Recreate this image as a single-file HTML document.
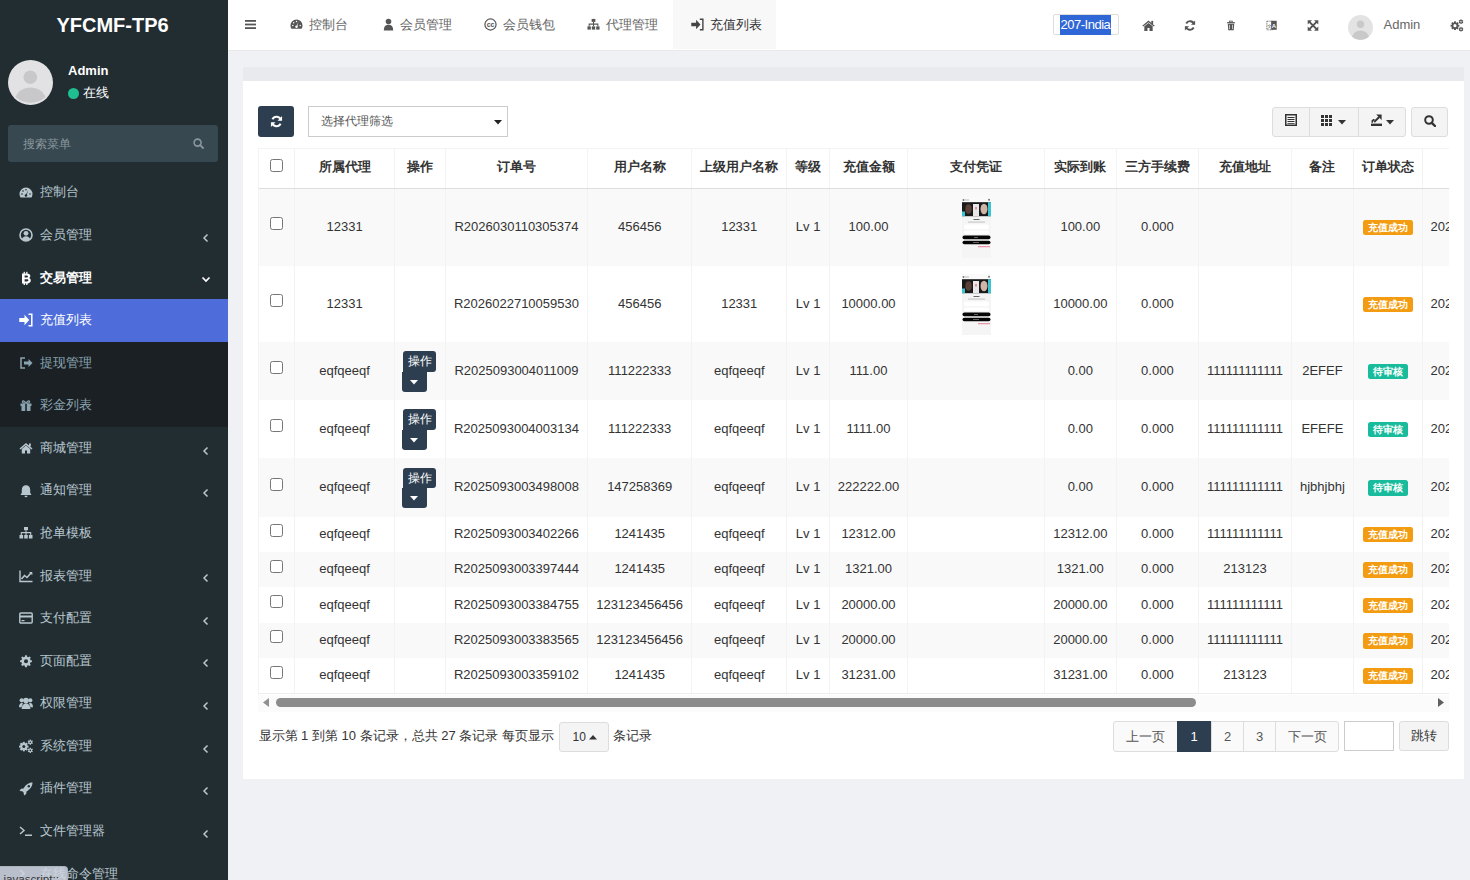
<!DOCTYPE html>
<html><head><meta charset="utf-8"><title>充值列表</title>
<style>
*{box-sizing:border-box;margin:0;padding:0}
html,body{width:1470px;height:880px;overflow:hidden}
body{font-family:"Liberation Sans",sans-serif;font-size:13px;color:#333;background:#f0f1f5;position:relative}
#sb{position:absolute;left:0;top:0;width:228px;height:880px;background:#222d32;overflow:hidden}
#logo{position:absolute;left:-1.5px;top:0;width:228px;height:50px;text-align:center;line-height:50px;color:#fff;font-size:20px;font-weight:bold}
.menu{position:absolute;left:0;width:228px;height:42.6px;color:#b8c7ce}
.menu .ic{position:absolute;left:19px;top:14.3px;width:14px;height:14px;line-height:0}
.menu .tx{position:absolute;left:40px;top:0;line-height:42.6px;font-size:13px}
.menu .ar{position:absolute;left:202.2px;top:18.8px}
.menu .ar2{position:absolute;left:201px;top:19px}
.menu.open{color:#fff}.menu.open .tx{font-weight:bold}.menu.act .tx{font-weight:500}
.menu.act{background:#4e6dda;color:#fff}
.menu.sub{background:#1b2025;color:#8aa4af}
#subbg{position:absolute;left:0;top:341.5px;width:228px;height:84px;background:#1b2025}
#hdr{position:absolute;left:228px;top:0;width:1242px;height:51px;background:#fff;border-bottom:1px solid #e6e8eb}
.tabt{position:absolute;top:1px;line-height:48px;font-size:13px;white-space:nowrap}
#panel{position:absolute;left:242.5px;top:66.5px;width:1221.2px;height:712px;background:#fff}
#ph{position:absolute;left:0;top:0;width:100%;height:14.3px;background:#e9eaee}
#tbl{position:absolute;left:258px;top:147.6px;width:1190.6px;height:547px;overflow:hidden}
.hrow{position:absolute;left:0;width:1300px;background:#fff}
.trow{position:absolute;left:0;width:1300px}
.cell{position:absolute;display:flex;align-items:center;justify-content:center;padding-bottom:2px;white-space:nowrap;overflow:hidden;font-size:13px;color:#333}
.th{font-weight:bold}
.vl{position:absolute;top:0;width:1px;height:546px;background:#f3f3f3}
.cb{display:inline-block;width:13px;height:13px;border:1px solid #767676;border-radius:2.5px;background:#fff}
.lbl{display:inline-block;color:#fff;font-size:10px;font-weight:bold;height:15.7px;line-height:15.7px;border-radius:2.5px;text-align:center;margin-top:2.5px}
.suc{background:#f39c12;width:50.5px}
.wait{background:#18bc9c;width:40.5px}
.opb{position:relative;width:36px;height:41px;margin-left:-2px;margin-top:3px}
.op1{position:absolute;left:1.8px;top:0;width:33.6px;height:20.7px;background:#2c3e50;border-radius:3px 3px 3px 0;color:#fff;font-size:12px;font-weight:500;line-height:20.5px;text-align:center}
.op2{position:absolute;left:0.6px;top:20.7px;width:25.7px;height:20px;background:#2c3e50;border-radius:0 0 3px 3px;line-height:0;text-align:center;padding-top:7.5px}
.btnp{position:absolute;background:#2c3e50;border-radius:3px}
.sel{position:absolute;border:1px solid #ccc;background:#fff}
.bgrp{position:absolute;background:#f4f4f4;border:1px solid #ddd;border-radius:3px}
.ft{position:absolute;font-size:13px;color:#333;line-height:18px;white-space:nowrap}
.pgi{position:absolute;top:720.6px;height:31.7px;line-height:31.7px;text-align:center;color:#555;font-size:13px}
</style></head><body>
<div id="sb">
<div id="logo">YFCMF-TP6</div>
<svg style="position:absolute;left:8px;top:60px" width="45" height="45" viewBox="0 0 45 45"><circle cx="22.5" cy="22.5" r="22.5" fill="#e2e2e4"/><circle cx="22.3" cy="17.3" r="6.8" fill="#c8c8ca"/><path d="M7.5 37c2.5-6 8-9.5 15-9.5s12.5 3.5 15 9.5A22.5 22.5 0 0 1 7.5 37z" fill="#c8c8ca"/></svg>
<div style="position:absolute;left:68px;top:62px;color:#fff;font-weight:bold;font-size:13px;line-height:18px">Admin</div>
<div style="position:absolute;left:68px;top:88px;width:11px;height:11px;border-radius:50%;background:#1fbf8f"></div>
<div style="position:absolute;left:83px;top:84px;color:#fff;font-size:13px;line-height:18px">在线</div>
<div style="position:absolute;left:8px;top:125px;width:210px;height:37px;background:#374850;border-radius:3px"></div>
<div style="position:absolute;left:22.5px;top:135px;color:#8b979d;font-size:12px;line-height:18px">搜索菜单</div>
<svg style="position:absolute;left:192.5px;top:137.5px" width="11" height="11" viewBox="0 0 11 11"><circle cx="4.6" cy="4.6" r="3.5" fill="none" stroke="#8b979d" stroke-width="1.6"/><path d="M7.2 7.2 L10 10" stroke="#8b979d" stroke-width="1.8" stroke-linecap="round"/></svg>
<div id="subbg"></div>
<div class="menu" style="top:171.4px"><span class="ic"><svg width="14" height="14" viewBox="0 0 14 14" style=""><path d="M7 1.5A6.5 6.5 0 0 0 0.5 8c0 1.3.4 2.5 1 3.5h11c.6-1 1-2.2 1-3.5A6.5 6.5 0 0 0 7 1.5z" fill="currentColor"/><circle cx="7" cy="9.5" r="1.3" fill="#222d32"/><path d="M6.6 9.3 L9.2 4.2 L7.6 9.6z" fill="#222d32"/><circle cx="3" cy="8" r=".8" fill="#222d32"/><circle cx="4" cy="5" r=".8" fill="#222d32"/><circle cx="7" cy="3.8" r=".8" fill="#222d32"/><circle cx="11" cy="8" r=".8" fill="#222d32"/></svg></span><span class="tx">控制台</span></div>
<div class="menu" style="top:214.0px"><span class="ic"><svg width="14" height="14" viewBox="0 0 14 14" style=""><circle cx="7" cy="7" r="6" fill="none" stroke="currentColor" stroke-width="1.6"/><circle cx="7" cy="5.3" r="2.4" fill="currentColor"/><path d="M2.8 11.2c.8-2 2.3-3 4.2-3s3.4 1 4.2 3A6 6 0 0 1 2.8 11.2z" fill="currentColor"/></svg></span><span class="tx">会员管理</span><svg class="ar" width="7" height="10" viewBox="0 0 7 10"><path d="M5.5 1.5 L2 5 L5.5 8.5" stroke="currentColor" stroke-width="1.5" fill="none"/></svg></div>
<div class="menu open" style="top:256.5px"><span class="ic"><svg width="14" height="14" viewBox="0 0 14 14" style=""><path d="M3 2.5h5c2.2 0 3.3 1 3.3 2.6 0 1-.6 1.7-1.4 2 1.1.3 1.9 1.1 1.9 2.4 0 1.8-1.3 2.9-3.6 2.9H3z" fill="currentColor"/><path d="M5.6 4.4h2c.9 0 1.3.4 1.3 1s-.4 1-1.3 1h-2zM5.6 8.2h2.3c1 0 1.5.4 1.5 1.1s-.5 1.1-1.5 1.1H5.6z" fill="#222d32"/><rect x="4.6" y="0.8" width="1.3" height="2" fill="currentColor"/><rect x="7.2" y="0.8" width="1.3" height="2" fill="currentColor"/><rect x="4.6" y="12" width="1.3" height="2" fill="currentColor"/><rect x="7.2" y="12" width="1.3" height="2" fill="currentColor"/></svg></span><span class="tx">交易管理</span><svg class="ar2" width="10" height="7" viewBox="0 0 10 7"><path d="M1.5 1.5 L5 5 L8.5 1.5" stroke="currentColor" stroke-width="1.7" fill="none"/></svg></div>
<div class="menu act" style="top:299.1px"><span class="ic"><svg width="14" height="14" viewBox="0 0 14 14" style=""><path d="M0.3 5h5.2V1.8l4.7 5.2-4.7 5.2V9H0.3z" fill="currentColor"/><path d="M9.5 1.3h3.3v11.4H9.5" fill="none" stroke="currentColor" stroke-width="1.5"/></svg></span><span class="tx">充值列表</span></div>
<div class="menu sub" style="top:341.7px"><span class="ic"><svg width="14" height="14" viewBox="0 0 14 14" style=""><path d="M6 2H2v10h4" fill="none" stroke="currentColor" stroke-width="1.5"/><path d="M5 5.5h4.5V3l4 4-4 4V8.5H5z" fill="currentColor"/></svg></span><span class="tx">提现管理</span></div>
<div class="menu sub" style="top:384.2px"><span class="ic"><svg width="14" height="14" viewBox="0 0 14 14" style=""><rect x="1.5" y="5.5" width="11" height="2.5" fill="currentColor"/><rect x="2.5" y="8" width="9" height="5" fill="currentColor"/><rect x="6.2" y="5" width="1.6" height="8" fill="#1b2025"/><path d="M7 5.2C5 2 3 2.5 3.5 4s3.5 1.2 3.5 1.2zM7 5.2C9 2 11 2.5 10.5 4S7 5.2 7 5.2z" fill="none" stroke="currentColor" stroke-width="1.2"/></svg></span><span class="tx">彩金列表</span></div>
<div class="menu" style="top:426.8px"><span class="ic"><svg width="14" height="14" viewBox="0 0 14 14" style=""><path d="M7 2 L0.5 7.5 1.5 8.5 7 4 12.5 8.5 13.5 7.5z" fill="currentColor"/><path d="M2.8 8v4.5h3.2V9.5h2v3h3.2V8L7 4.6z" fill="currentColor"/><rect x="10" y="2.5" width="1.8" height="3" fill="currentColor"/></svg></span><span class="tx">商城管理</span><svg class="ar" width="7" height="10" viewBox="0 0 7 10"><path d="M5.5 1.5 L2 5 L5.5 8.5" stroke="currentColor" stroke-width="1.5" fill="none"/></svg></div>
<div class="menu" style="top:469.4px"><span class="ic"><svg width="14" height="14" viewBox="0 0 14 14" style=""><path d="M7 1.2c-2.6 0-4.2 2-4.2 4.6v3L1.5 11h11l-1.3-2.2v-3C11.2 3.2 9.6 1.2 7 1.2z" fill="currentColor"/><path d="M5.5 11.8a1.5 1.5 0 0 0 3 0z" fill="currentColor"/></svg></span><span class="tx">通知管理</span><svg class="ar" width="7" height="10" viewBox="0 0 7 10"><path d="M5.5 1.5 L2 5 L5.5 8.5" stroke="currentColor" stroke-width="1.5" fill="none"/></svg></div>
<div class="menu" style="top:512.0px"><span class="ic"><svg width="14" height="14" viewBox="0 0 14 14" style=""><rect x="5" y="1" width="4" height="3.2" fill="currentColor"/><rect x="0.5" y="9" width="3.6" height="3.5" fill="currentColor"/><rect x="5.2" y="9" width="3.6" height="3.5" fill="currentColor"/><rect x="9.9" y="9" width="3.6" height="3.5" fill="currentColor"/><path d="M7 4.2V9M2.3 9V6.6h9.4V9" fill="none" stroke="currentColor" stroke-width="1.1"/></svg></span><span class="tx">抢单模板</span></div>
<div class="menu" style="top:554.5px"><span class="ic"><svg width="14" height="14" viewBox="0 0 14 14" style=""><path d="M1 1.5V12.5H13.5" fill="none" stroke="currentColor" stroke-width="1.4"/><path d="M2.5 10 L5.5 6.5 8 8.5 12 4" fill="none" stroke="currentColor" stroke-width="1.6"/><path d="M10 3h3.3v3.3z" fill="currentColor"/></svg></span><span class="tx">报表管理</span><svg class="ar" width="7" height="10" viewBox="0 0 7 10"><path d="M5.5 1.5 L2 5 L5.5 8.5" stroke="currentColor" stroke-width="1.5" fill="none"/></svg></div>
<div class="menu" style="top:597.1px"><span class="ic"><svg width="14" height="14" viewBox="0 0 14 14" style=""><rect x="0.8" y="2" width="12.4" height="10" rx="1" fill="none" stroke="currentColor" stroke-width="1.4"/><rect x="0.8" y="4.5" width="12.4" height="2" fill="currentColor"/><rect x="2.5" y="9" width="3" height="1.2" fill="currentColor"/></svg></span><span class="tx">支付配置</span><svg class="ar" width="7" height="10" viewBox="0 0 7 10"><path d="M5.5 1.5 L2 5 L5.5 8.5" stroke="currentColor" stroke-width="1.5" fill="none"/></svg></div>
<div class="menu" style="top:639.7px"><span class="ic"><svg width="14" height="14" viewBox="0 0 14 14" style=""><path d="M6 1h2l.4 1.8 1.3.6 1.6-1 1.4 1.4-1 1.6.6 1.3L14 7v2l-1.8.4-.6 1.3 1 1.6-1.4 1.4-1.6-1-1.3.6L8 15H6l-.4-1.8-1.3-.6-1.6 1-1.4-1.4 1-1.6-.6-1.3L0 9V7l1.8-.4.6-1.3-1-1.6 1.4-1.4 1.6 1 1.3-.6z" transform="scale(.85) translate(1.2,0.5)" fill="currentColor"/><circle cx="7" cy="7.2" r="2" fill="#222d32"/></svg></span><span class="tx">页面配置</span><svg class="ar" width="7" height="10" viewBox="0 0 7 10"><path d="M5.5 1.5 L2 5 L5.5 8.5" stroke="currentColor" stroke-width="1.5" fill="none"/></svg></div>
<div class="menu" style="top:682.2px"><span class="ic"><svg width="14" height="14" viewBox="0 0 14 14" style=""><circle cx="7" cy="4.6" r="2.8" fill="currentColor"/><path d="M2.6 13c0-3.3 1.6-5.6 4.4-5.6s4.4 2.3 4.4 5.6z" fill="currentColor"/><circle cx="2.7" cy="4.3" r="2.1" fill="currentColor"/><circle cx="11.3" cy="4.3" r="2.1" fill="currentColor"/><path d="M0 11.3c0-2.6 1-4.3 2.7-4.3.7 0 1.2.2 1.6.5-1 1-1.6 2.3-1.7 3.8z" fill="currentColor"/><path d="M14 11.3c0-2.6-1-4.3-2.7-4.3-.7 0-1.2.2-1.6.5 1 1 1.6 2.3 1.7 3.8z" fill="currentColor"/></svg></span><span class="tx">权限管理</span><svg class="ar" width="7" height="10" viewBox="0 0 7 10"><path d="M5.5 1.5 L2 5 L5.5 8.5" stroke="currentColor" stroke-width="1.5" fill="none"/></svg></div>
<div class="menu" style="top:724.8px"><span class="ic"><svg width="14" height="14" viewBox="0 0 14 14" style=""><rect x="3.75" y="2.90" width="2.10" height="9.40" transform="rotate(0.0 4.8 7.6)" fill="currentColor"/><rect x="3.75" y="2.90" width="2.10" height="9.40" transform="rotate(45.0 4.8 7.6)" fill="currentColor"/><rect x="3.75" y="2.90" width="2.10" height="9.40" transform="rotate(90.0 4.8 7.6)" fill="currentColor"/><rect x="3.75" y="2.90" width="2.10" height="9.40" transform="rotate(135.0 4.8 7.6)" fill="currentColor"/><circle cx="4.8" cy="7.6" r="3.5" fill="currentColor"/><circle cx="4.8" cy="7.6" r="1.5" fill="#222d32"/><rect x="10.65" y="0.60" width="1.30" height="5.20" transform="rotate(0.0 11.3 3.2)" fill="currentColor"/><rect x="10.65" y="0.60" width="1.30" height="5.20" transform="rotate(60.0 11.3 3.2)" fill="currentColor"/><rect x="10.65" y="0.60" width="1.30" height="5.20" transform="rotate(120.0 11.3 3.2)" fill="currentColor"/><circle cx="11.3" cy="3.2" r="1.8" fill="currentColor"/><circle cx="11.3" cy="3.2" r=".8" fill="#222d32"/><rect x="10.65" y="8.80" width="1.30" height="5.20" transform="rotate(0.0 11.3 11.4)" fill="currentColor"/><rect x="10.65" y="8.80" width="1.30" height="5.20" transform="rotate(60.0 11.3 11.4)" fill="currentColor"/><rect x="10.65" y="8.80" width="1.30" height="5.20" transform="rotate(120.0 11.3 11.4)" fill="currentColor"/><circle cx="11.3" cy="11.4" r="1.8" fill="currentColor"/><circle cx="11.3" cy="11.4" r=".8" fill="#222d32"/></svg></span><span class="tx">系统管理</span><svg class="ar" width="7" height="10" viewBox="0 0 7 10"><path d="M5.5 1.5 L2 5 L5.5 8.5" stroke="currentColor" stroke-width="1.5" fill="none"/></svg></div>
<div class="menu" style="top:767.4px"><span class="ic"><svg width="14" height="14" viewBox="0 0 14 14" style=""><path d="M13.5 0.5C9.5 0.5 6.5 3 4.5 6.5L2 6.8 0.5 9l2.8.3L4.7 10.7 5 13.5l2.2-1.5.3-2.5C11 7.5 13.5 4.5 13.5 0.5z" fill="currentColor"/><circle cx="9.8" cy="4.2" r="1.2" fill="#222d32"/></svg></span><span class="tx">插件管理</span><svg class="ar" width="7" height="10" viewBox="0 0 7 10"><path d="M5.5 1.5 L2 5 L5.5 8.5" stroke="currentColor" stroke-width="1.5" fill="none"/></svg></div>
<div class="menu" style="top:809.9px"><span class="ic"><svg width="14" height="14" viewBox="0 0 14 14" style=""><path d="M1 3l4 3.5-4 3.5" fill="none" stroke="currentColor" stroke-width="1.5"/><rect x="6" y="10.5" width="7" height="1.5" fill="currentColor"/></svg></span><span class="tx">文件管理器</span><svg class="ar" width="7" height="10" viewBox="0 0 7 10"><path d="M5.5 1.5 L2 5 L5.5 8.5" stroke="currentColor" stroke-width="1.5" fill="none"/></svg></div>
<div class="menu" style="top:852.5px"><span class="ic"><svg width="14" height="14" viewBox="0 0 14 14" style=""><path d="M1 3l4 3.5-4 3.5" fill="none" stroke="currentColor" stroke-width="1.5"/><rect x="6" y="10.5" width="7" height="1.5" fill="currentColor"/></svg></span><span class="tx">在线命令管理</span></div>
</div>
<div id="hdr">
<svg style="position:absolute;left:17px;top:20px" width="11" height="9" viewBox="0 0 11 9"><rect y="0" width="11" height="1.8" fill="#555"/><rect y="3.6" width="11" height="1.8" fill="#555"/><rect y="7.2" width="11" height="1.8" fill="#555"/></svg>
<div style="position:absolute;left:444.6px;top:0;width:103.4px;height:48.5px;background:#f8f8f8"></div>
<span style="position:absolute;left:62px;top:18px;color:#555"><svg width="13" height="13" viewBox="0 0 14 14" style=""><path d="M7 1.5A6.5 6.5 0 0 0 0.5 8c0 1.3.4 2.5 1 3.5h11c.6-1 1-2.2 1-3.5A6.5 6.5 0 0 0 7 1.5z" fill="currentColor"/><circle cx="7" cy="9.5" r="1.3" fill="#fff"/><path d="M6.6 9.3 L9.2 4.2 L7.6 9.6z" fill="#fff"/><circle cx="3" cy="8" r=".8" fill="#fff"/><circle cx="4" cy="5" r=".8" fill="#fff"/><circle cx="7" cy="3.8" r=".8" fill="#fff"/><circle cx="11" cy="8" r=".8" fill="#fff"/></svg></span>
<span class="tabt" style="left:80.5px;color:#666">控制台</span>
<span style="position:absolute;left:154px;top:18px;color:#555"><svg width="13" height="13" viewBox="0 0 14 14" style=""><circle cx="7" cy="3.8" r="3" fill="currentColor"/><path d="M2 13.5c0-4 1.5-6.3 5-6.3s5 2.3 5 6.3z" fill="currentColor"/></svg></span>
<span class="tabt" style="left:171.5px;color:#666">会员管理</span>
<span style="position:absolute;left:255.5px;top:18px;color:#555"><svg width="13" height="13" viewBox="0 0 14 14" style=""><circle cx="7" cy="7" r="6" fill="none" stroke="currentColor" stroke-width="1.3"/><text x="7" y="9.3" text-anchor="middle" font-family="Liberation Sans" font-weight="bold" font-size="7.6" fill="currentColor" letter-spacing="-0.3">cc</text></svg></span>
<span class="tabt" style="left:274.5px;color:#666">会员钱包</span>
<span style="position:absolute;left:359px;top:18px;color:#555"><svg width="13" height="13" viewBox="0 0 14 14" style=""><rect x="5" y="1" width="4" height="3.2" fill="currentColor"/><rect x="0.5" y="9" width="3.6" height="3.5" fill="currentColor"/><rect x="5.2" y="9" width="3.6" height="3.5" fill="currentColor"/><rect x="9.9" y="9" width="3.6" height="3.5" fill="currentColor"/><path d="M7 4.2V9M2.3 9V6.6h9.4V9" fill="none" stroke="currentColor" stroke-width="1.1"/></svg></span>
<span class="tabt" style="left:378px;color:#666">代理管理</span>
<span style="position:absolute;left:463px;top:18px;color:#444"><svg width="13" height="13" viewBox="0 0 14 14" style=""><path d="M0.3 5h5.2V1.8l4.7 5.2-4.7 5.2V9H0.3z" fill="currentColor"/><path d="M9.5 1.3h3.3v11.4H9.5" fill="none" stroke="currentColor" stroke-width="1.5"/></svg></span>
<span class="tabt" style="left:481.5px;color:#333">充值列表</span>
<div style="position:absolute;left:824.5px;top:14.3px;width:66px;height:21.2px;border:1px solid #ddd;border-radius:2px;background:#fff"></div>
<div style="position:absolute;left:832px;top:15px;width:51px;height:19.7px;background:#3067d6;color:#fff;font-size:13px;line-height:19.7px;letter-spacing:-0.5px;padding-left:0.6px;white-space:nowrap">207-India</div>
<span style="position:absolute;left:913.5px;top:18.5px;color:#555"><svg width="13" height="13" viewBox="0 0 14 14" style=""><path d="M7 1.5 L0.3 7.2 1.3 8.2 7 3.6 12.7 8.2 13.7 7.2z" fill="currentColor"/><path d="M2.5 7.8v5h3.4V9.6h2.2v3.2h3.4v-5L7 4.2z" fill="currentColor"/><rect x="10" y="2" width="2" height="3.5" fill="currentColor"/></svg></span>
<span style="position:absolute;left:956px;top:18.5px;color:#555"><svg width="12" height="13" viewBox="0 0 14 14" style=""><path d="M11.8 5.5A5 5 0 0 0 2.6 4.6" fill="none" stroke="currentColor" stroke-width="2.2"/><path d="M13 1.2v4.9H8.1z" fill="currentColor"/><path d="M2.2 8.5a5 5 0 0 0 9.2.9" fill="none" stroke="currentColor" stroke-width="2.2"/><path d="M1 12.8V7.9h4.9z" fill="currentColor"/></svg></span>
<span style="position:absolute;left:998px;top:18.5px;color:#555"><svg width="10" height="13" viewBox="0 0 14 14" style=""><rect x="1.5" y="2.3" width="11" height="1.6" fill="currentColor"/><rect x="5" y="0.8" width="4" height="1.6" fill="none" stroke="currentColor" stroke-width="1"/><path d="M2.5 4.5h9l-.7 9H3.2z" fill="currentColor"/><rect x="4.7" y="6" width=".9" height="6" fill="#fff"/><rect x="8.4" y="6" width=".9" height="6" fill="#fff"/></svg></span>
<span style="position:absolute;left:1038px;top:18.5px;color:#555"><svg width="12" height="13" viewBox="0 0 14 14" style=""><rect x="1" y="2" width="6.5" height="10" fill="none" stroke="currentColor" stroke-width="1" stroke-dasharray="1.2 .8"/><path d="M6 1.5h6.5v10.5H6z" fill="currentColor"/><text x="9.3" y="10" text-anchor="middle" font-family="Liberation Sans" font-weight="bold" font-size="7" fill="#fff">A</text><text x="3.6" y="9.5" text-anchor="middle" font-family="Liberation Sans" font-size="6" fill="currentColor">文</text></svg></span>
<span style="position:absolute;left:1079px;top:18.5px;color:#555"><svg width="12" height="13" viewBox="0 0 14 14" style=""><path d="M2.5 2.5 L11.5 11.5 M11.5 2.5 L2.5 11.5" stroke="currentColor" stroke-width="2.3"/><path d="M0.8 0.8h5L0.8 5.8z M13.2 0.8v5L8.2 0.8z M0.8 13.2v-5L5.8 13.2z M13.2 13.2h-5L13.2 8.2z" fill="currentColor"/></svg></span>
<svg style="position:absolute;left:1120px;top:14.7px" width="25" height="25" viewBox="0 0 25 25"><circle cx="12.5" cy="12.5" r="12.5" fill="#e3e3e3"/><circle cx="12.5" cy="9.3" r="3.7" fill="#c9c9c9"/><path d="M4 21.5c1.5-4 4.5-6 8.5-6s7 2 8.5 6A12.5 12.5 0 0 1 4 21.5z" fill="#c9c9c9"/></svg>
<span class="tabt" style="left:1155.5px;color:#666">Admin</span>
<span style="position:absolute;left:1222px;top:18.5px;color:#555"><svg width="14" height="13" viewBox="0 0 14 14" style=""><rect x="3.75" y="2.50" width="2.10" height="9.40" transform="rotate(0.0 4.8 7.2)" fill="currentColor"/><rect x="3.75" y="2.50" width="2.10" height="9.40" transform="rotate(45.0 4.8 7.2)" fill="currentColor"/><rect x="3.75" y="2.50" width="2.10" height="9.40" transform="rotate(90.0 4.8 7.2)" fill="currentColor"/><rect x="3.75" y="2.50" width="2.10" height="9.40" transform="rotate(135.0 4.8 7.2)" fill="currentColor"/><circle cx="4.8" cy="7.2" r="3.5" fill="currentColor"/><circle cx="4.8" cy="7.2" r="1.7" fill="#fff"/><rect x="10.65" y="0.40" width="1.30" height="5.00" transform="rotate(0.0 11.3 2.9)" fill="currentColor"/><rect x="10.65" y="0.40" width="1.30" height="5.00" transform="rotate(60.0 11.3 2.9)" fill="currentColor"/><rect x="10.65" y="0.40" width="1.30" height="5.00" transform="rotate(120.0 11.3 2.9)" fill="currentColor"/><circle cx="11.3" cy="2.9" r="1.7" fill="currentColor"/><circle cx="11.3" cy="2.9" r=".8" fill="#fff"/><rect x="10.65" y="8.50" width="1.30" height="5.00" transform="rotate(0.0 11.3 11)" fill="currentColor"/><rect x="10.65" y="8.50" width="1.30" height="5.00" transform="rotate(60.0 11.3 11)" fill="currentColor"/><rect x="10.65" y="8.50" width="1.30" height="5.00" transform="rotate(120.0 11.3 11)" fill="currentColor"/><circle cx="11.3" cy="11" r="1.7" fill="currentColor"/><circle cx="11.3" cy="11" r=".8" fill="#fff"/></svg></span>
</div>
<div id="panel"><div id="ph"></div></div>
<div class="btnp" style="left:258.2px;top:106.3px;width:35.6px;height:30.4px"><span style="position:absolute;left:11.5px;top:8.5px;color:#fff"><svg width="13" height="13" viewBox="0 0 14 14" style=""><path d="M11.8 5.5A5 5 0 0 0 2.6 4.6" fill="none" stroke="currentColor" stroke-width="2.2"/><path d="M13 1.2v4.9H8.1z" fill="currentColor"/><path d="M2.2 8.5a5 5 0 0 0 9.2.9" fill="none" stroke="currentColor" stroke-width="2.2"/><path d="M1 12.8V7.9h4.9z" fill="currentColor"/></svg></span></div>
<div class="sel" style="left:308.2px;top:106.3px;width:199.5px;height:30.3px"><span style="position:absolute;left:12px;top:0;line-height:28px;color:#555;font-size:12px">选择代理筛选</span><svg width="8" height="5" viewBox="0 0 8 5" style="position:absolute;left:184.5px;top:13px"><path d="M0 0h8L4 4.5z" fill="#222"/></svg></div>
<div class="bgrp" style="left:1271.6px;top:106.5px;width:134px;height:30px">
<div style="position:absolute;left:36.2px;top:0;width:1px;height:28px;background:#ddd"></div>
<div style="position:absolute;left:85.2px;top:0;width:1px;height:28px;background:#ddd"></div>
<span style="position:absolute;left:12.8px;top:6.5px;line-height:0"><svg width="12" height="12" viewBox="0 0 12 12"><rect x=".75" y=".75" width="10.5" height="10.5" fill="none" stroke="#333" stroke-width="1.5"/><rect x="2.5" y="3" width="7" height="1" fill="#333"/><rect x="2.5" y="5" width="7" height="1" fill="#333"/><rect x="2.5" y="7" width="7" height="1" fill="#333"/><rect x="2.5" y="9" width="7" height=".8" fill="#333"/></svg></span>
<span style="position:absolute;left:48.8px;top:7.5px;line-height:0"><svg width="11" height="11" viewBox="0 0 11 11"><rect x="0" y="0" width="3" height="3" fill="#333"/><rect x="0" y="4" width="3" height="3" fill="#333"/><rect x="0" y="8" width="3" height="3" fill="#333"/><rect x="4" y="0" width="3" height="3" fill="#333"/><rect x="4" y="4" width="3" height="3" fill="#333"/><rect x="4" y="8" width="3" height="3" fill="#333"/><rect x="8" y="0" width="3" height="3" fill="#333"/><rect x="8" y="4" width="3" height="3" fill="#333"/><rect x="8" y="8" width="3" height="3" fill="#333"/></svg></span>
<span style="position:absolute;left:65.5px;top:12.5px;line-height:0"><svg width="8" height="4.5" viewBox="0 0 8 4.5"><path d="M0 0h8L4 4.5z" fill="#333"/></svg></span>
<span style="position:absolute;left:98px;top:6.5px;line-height:0"><svg width="12" height="12" viewBox="0 0 12 12"><rect x="0" y="9.6" width="11" height="2.4" fill="#333"/><path d="M0.5 8.8 L0.5 6.5 L2.2 5 L3.5 5 L3.5 6.2 L2 7.5 L2 8.8z" fill="#333"/><path d="M3.2 8 L8.2 3" stroke="#333" stroke-width="1.8"/><path d="M5.2 0.6 H10.6 V6 z" fill="#333"/></svg></span>
<span style="position:absolute;left:113.5px;top:12.5px;line-height:0"><svg width="8" height="4.5" viewBox="0 0 8 4.5"><path d="M0 0h8L4 4.5z" fill="#333"/></svg></span>
</div>
<div class="bgrp" style="left:1411.3px;top:106.5px;width:37.2px;height:30px"><svg style="position:absolute;left:12px;top:7px" width="12" height="12" viewBox="0 0 12 12"><circle cx="5" cy="5" r="3.8" fill="none" stroke="#333" stroke-width="2"/><path d="M7.8 7.8 L11 11" stroke="#333" stroke-width="2.4" stroke-linecap="round"/></svg></div>
<div style="position:absolute;left:258px;top:694.5px;width:1190.6px;height:17px;background:#fbfbfb"></div>
<svg style="position:absolute;left:262.5px;top:698px" width="6" height="9" viewBox="0 0 6 9"><path d="M6 0V9L0 4.5z" fill="#909090"/></svg>
<div style="position:absolute;left:276px;top:698px;width:920px;height:9px;border-radius:4.5px;background:#8c8c8c"></div>
<svg style="position:absolute;left:1438px;top:698px" width="6" height="9" viewBox="0 0 6 9"><path d="M0 0V9L6 4.5z" fill="#606060"/></svg>
<div class="ft" style="left:258.5px;top:727px">显示第 1 到第 10 条记录，总共 27 条记录 每页显示</div>
<div class="bgrp" style="left:558.5px;top:722px;width:50px;height:30px;background:#f4f4f4"><span style="position:absolute;left:13px;top:0;line-height:28px;font-size:12px;color:#333">10</span><svg width="8" height="5" viewBox="0 0 8 5" style="position:absolute;left:29px;top:12px"><path d="M0 4.5h8L4 0z" fill="#333"/></svg></div>
<div class="ft" style="left:613px;top:727px">条记录</div>
<div style="position:absolute;left:1113.4px;top:720.6px;width:225.2px;height:31.7px;border:1px solid #ddd;border-radius:3px;background:#fafafa"></div>
<div class="pgi" style="left:1113.4px;width:63.59999999999991px;">上一页</div>
<div class="pgi" style="left:1177px;width:34px;background:#2c3e50;color:#fff;border-color:#2c3e50">1</div>
<div class="pgi" style="left:1211px;width:32px;border-left:1px solid #ddd;">2</div>
<div class="pgi" style="left:1243px;width:32px;border-left:1px solid #ddd;">3</div>
<div class="pgi" style="left:1275px;width:63.59999999999991px;border-left:1px solid #ddd;">下一页</div>
<div style="position:absolute;left:1344.3px;top:720.6px;width:49.4px;height:30px;border:1px solid #ccc;background:#fff"></div>
<div class="bgrp" style="left:1399px;top:721.4px;width:49.6px;height:30px;background:#f4f4f4"><span style="position:absolute;left:0;width:48px;text-align:center;line-height:28px;color:#333">跳转</span></div>
<div style="position:absolute;left:0;top:866px;height:14px;width:68px;background:rgba(206,213,224,0.88);border:1px solid #aab2be;border-left:0;border-bottom:0;border-top-right-radius:4px;font-size:11.6px;line-height:24px;color:#333;padding-left:3.5px;overflow:hidden;white-space:nowrap">javascript:;</div>
<div id="tbl">
<div class="hrow" style="top:0.0px;height:41.0px"></div>
<div class="cell" style="left:0px;top:0;width:36.5px;height:40.0px"><span class="cb" style="margin-top:-3px"></span></div>
<div class="cell th" style="left:36.5px;top:0;width:100.19999999999999px;height:40.0px">所属代理</div>
<div class="cell th" style="left:136.7px;top:0;width:50.60000000000002px;height:40.0px">操作</div>
<div class="cell th" style="left:187.3px;top:0;width:142.3px;height:40.0px">订单号</div>
<div class="cell th" style="left:329.6px;top:0;width:104.19999999999993px;height:40.0px">用户名称</div>
<div class="cell th" style="left:433.79999999999995px;top:0;width:94.90000000000009px;height:40.0px">上级用户名称</div>
<div class="cell th" style="left:528.7px;top:0;width:42.799999999999955px;height:40.0px">等级</div>
<div class="cell th" style="left:571.5px;top:0;width:78.0px;height:40.0px">充值金额</div>
<div class="cell th" style="left:649.5px;top:0;width:136.9000000000001px;height:40.0px">支付凭证</div>
<div class="cell th" style="left:786.4000000000001px;top:0;width:71.79999999999995px;height:40.0px">实际到账</div>
<div class="cell th" style="left:858.2px;top:0;width:82.39999999999986px;height:40.0px">三方手续费</div>
<div class="cell th" style="left:940.5999999999999px;top:0;width:92.80000000000018px;height:40.0px">充值地址</div>
<div class="cell th" style="left:1033.4px;top:0;width:62.0px;height:40.0px">备注</div>
<div class="cell th" style="left:1095.4px;top:0;width:68.79999999999995px;height:40.0px">订单状态</div>
<div class="cell th" style="left:1164.2px;top:0;width:107.79999999999995px;height:40.0px">创建时间</div>
<div class="trow" style="top:41.0px;height:77.4px;background:#f9f9f9"></div>
<div class="cell" style="left:0.0px;top:41.0px;width:36.5px;height:77.4px"><span class="cb" style="margin-top:-5px"></span></div>
<div class="cell" style="left:36.5px;top:41.0px;width:100.2px;height:77.4px">12331</div>
<div class="cell" style="left:136.7px;top:41.0px;width:50.6px;height:77.4px"></div>
<div class="cell" style="left:187.3px;top:41.0px;width:142.3px;height:77.4px">R2026030110305374</div>
<div class="cell" style="left:329.6px;top:41.0px;width:104.2px;height:77.4px">456456</div>
<div class="cell" style="left:433.8px;top:41.0px;width:94.9px;height:77.4px">12331</div>
<div class="cell" style="left:528.7px;top:41.0px;width:42.8px;height:77.4px">Lv 1</div>
<div class="cell" style="left:571.5px;top:41.0px;width:78.0px;height:77.4px">100.00</div>
<div class="cell" style="left:649.5px;top:41.0px;width:136.9px;height:77.4px"></div>
<div class="cell" style="left:786.4px;top:41.0px;width:71.8px;height:77.4px">100.00</div>
<div class="cell" style="left:858.2px;top:41.0px;width:82.4px;height:77.4px">0.000</div>
<div class="cell" style="left:940.6px;top:41.0px;width:92.8px;height:77.4px"></div>
<div class="cell" style="left:1033.4px;top:41.0px;width:62.0px;height:77.4px"></div>
<div class="cell" style="left:1095.4px;top:41.0px;width:68.8px;height:77.4px"><span class="lbl suc">充值成功</span></div>
<div class="cell" style="left:1172.5px;top:41.0px;width:60px;height:77.4px;justify-content:flex-start">2026</div>
<div class="trow" style="top:118.4px;height:76.3px;background:#fff"></div>
<div class="cell" style="left:0.0px;top:118.4px;width:36.5px;height:76.3px"><span class="cb" style="margin-top:-5px"></span></div>
<div class="cell" style="left:36.5px;top:118.4px;width:100.2px;height:76.3px">12331</div>
<div class="cell" style="left:136.7px;top:118.4px;width:50.6px;height:76.3px"></div>
<div class="cell" style="left:187.3px;top:118.4px;width:142.3px;height:76.3px">R2026022710059530</div>
<div class="cell" style="left:329.6px;top:118.4px;width:104.2px;height:76.3px">456456</div>
<div class="cell" style="left:433.8px;top:118.4px;width:94.9px;height:76.3px">12331</div>
<div class="cell" style="left:528.7px;top:118.4px;width:42.8px;height:76.3px">Lv 1</div>
<div class="cell" style="left:571.5px;top:118.4px;width:78.0px;height:76.3px">10000.00</div>
<div class="cell" style="left:649.5px;top:118.4px;width:136.9px;height:76.3px"></div>
<div class="cell" style="left:786.4px;top:118.4px;width:71.8px;height:76.3px">10000.00</div>
<div class="cell" style="left:858.2px;top:118.4px;width:82.4px;height:76.3px">0.000</div>
<div class="cell" style="left:940.6px;top:118.4px;width:92.8px;height:76.3px"></div>
<div class="cell" style="left:1033.4px;top:118.4px;width:62.0px;height:76.3px"></div>
<div class="cell" style="left:1095.4px;top:118.4px;width:68.8px;height:76.3px"><span class="lbl suc">充值成功</span></div>
<div class="cell" style="left:1172.5px;top:118.4px;width:60px;height:76.3px;justify-content:flex-start">2026</div>
<div class="trow" style="top:194.7px;height:58.2px;background:#f9f9f9"></div>
<div class="cell" style="left:0.0px;top:194.7px;width:36.5px;height:58.2px"><span class="cb" style="margin-top:-5px"></span></div>
<div class="cell" style="left:36.5px;top:194.7px;width:100.2px;height:58.2px">eqfqeeqf</div>
<div class="cell" style="left:136.7px;top:194.7px;width:50.6px;height:58.2px"><div class="opb"><div class="op1">操作</div><div class="op2"><svg width="8" height="5" viewBox="0 0 8 5"><path d="M0 0h8L4 4.5z" fill="#fff"/></svg></div></div></div>
<div class="cell" style="left:187.3px;top:194.7px;width:142.3px;height:58.2px">R2025093004011009</div>
<div class="cell" style="left:329.6px;top:194.7px;width:104.2px;height:58.2px">111222333</div>
<div class="cell" style="left:433.8px;top:194.7px;width:94.9px;height:58.2px">eqfqeeqf</div>
<div class="cell" style="left:528.7px;top:194.7px;width:42.8px;height:58.2px">Lv 1</div>
<div class="cell" style="left:571.5px;top:194.7px;width:78.0px;height:58.2px">111.00</div>
<div class="cell" style="left:649.5px;top:194.7px;width:136.9px;height:58.2px"></div>
<div class="cell" style="left:786.4px;top:194.7px;width:71.8px;height:58.2px">0.00</div>
<div class="cell" style="left:858.2px;top:194.7px;width:82.4px;height:58.2px">0.000</div>
<div class="cell" style="left:940.6px;top:194.7px;width:92.8px;height:58.2px">111111111111</div>
<div class="cell" style="left:1033.4px;top:194.7px;width:62.0px;height:58.2px">2EFEF</div>
<div class="cell" style="left:1095.4px;top:194.7px;width:68.8px;height:58.2px"><span class="lbl wait">待审核</span></div>
<div class="cell" style="left:1172.5px;top:194.7px;width:60px;height:58.2px;justify-content:flex-start">2025</div>
<div class="trow" style="top:252.9px;height:57.8px;background:#fff"></div>
<div class="cell" style="left:0.0px;top:252.9px;width:36.5px;height:57.8px"><span class="cb" style="margin-top:-5px"></span></div>
<div class="cell" style="left:36.5px;top:252.9px;width:100.2px;height:57.8px">eqfqeeqf</div>
<div class="cell" style="left:136.7px;top:252.9px;width:50.6px;height:57.8px"><div class="opb"><div class="op1">操作</div><div class="op2"><svg width="8" height="5" viewBox="0 0 8 5"><path d="M0 0h8L4 4.5z" fill="#fff"/></svg></div></div></div>
<div class="cell" style="left:187.3px;top:252.9px;width:142.3px;height:57.8px">R2025093004003134</div>
<div class="cell" style="left:329.6px;top:252.9px;width:104.2px;height:57.8px">111222333</div>
<div class="cell" style="left:433.8px;top:252.9px;width:94.9px;height:57.8px">eqfqeeqf</div>
<div class="cell" style="left:528.7px;top:252.9px;width:42.8px;height:57.8px">Lv 1</div>
<div class="cell" style="left:571.5px;top:252.9px;width:78.0px;height:57.8px">1111.00</div>
<div class="cell" style="left:649.5px;top:252.9px;width:136.9px;height:57.8px"></div>
<div class="cell" style="left:786.4px;top:252.9px;width:71.8px;height:57.8px">0.00</div>
<div class="cell" style="left:858.2px;top:252.9px;width:82.4px;height:57.8px">0.000</div>
<div class="cell" style="left:940.6px;top:252.9px;width:92.8px;height:57.8px">111111111111</div>
<div class="cell" style="left:1033.4px;top:252.9px;width:62.0px;height:57.8px">EFEFE</div>
<div class="cell" style="left:1095.4px;top:252.9px;width:68.8px;height:57.8px"><span class="lbl wait">待审核</span></div>
<div class="cell" style="left:1172.5px;top:252.9px;width:60px;height:57.8px;justify-content:flex-start">2025</div>
<div class="trow" style="top:310.7px;height:58.5px;background:#f9f9f9"></div>
<div class="cell" style="left:0.0px;top:310.7px;width:36.5px;height:58.5px"><span class="cb" style="margin-top:-5px"></span></div>
<div class="cell" style="left:36.5px;top:310.7px;width:100.2px;height:58.5px">eqfqeeqf</div>
<div class="cell" style="left:136.7px;top:310.7px;width:50.6px;height:58.5px"><div class="opb"><div class="op1">操作</div><div class="op2"><svg width="8" height="5" viewBox="0 0 8 5"><path d="M0 0h8L4 4.5z" fill="#fff"/></svg></div></div></div>
<div class="cell" style="left:187.3px;top:310.7px;width:142.3px;height:58.5px">R2025093003498008</div>
<div class="cell" style="left:329.6px;top:310.7px;width:104.2px;height:58.5px">147258369</div>
<div class="cell" style="left:433.8px;top:310.7px;width:94.9px;height:58.5px">eqfqeeqf</div>
<div class="cell" style="left:528.7px;top:310.7px;width:42.8px;height:58.5px">Lv 1</div>
<div class="cell" style="left:571.5px;top:310.7px;width:78.0px;height:58.5px">222222.00</div>
<div class="cell" style="left:649.5px;top:310.7px;width:136.9px;height:58.5px"></div>
<div class="cell" style="left:786.4px;top:310.7px;width:71.8px;height:58.5px">0.00</div>
<div class="cell" style="left:858.2px;top:310.7px;width:82.4px;height:58.5px">0.000</div>
<div class="cell" style="left:940.6px;top:310.7px;width:92.8px;height:58.5px">111111111111</div>
<div class="cell" style="left:1033.4px;top:310.7px;width:62.0px;height:58.5px">hjbhjbhj</div>
<div class="cell" style="left:1095.4px;top:310.7px;width:68.8px;height:58.5px"><span class="lbl wait">待审核</span></div>
<div class="cell" style="left:1172.5px;top:310.7px;width:60px;height:58.5px;justify-content:flex-start">2025</div>
<div class="trow" style="top:369.2px;height:35.1px;background:#fff"></div>
<div class="cell" style="left:0.0px;top:369.2px;width:36.5px;height:35.1px"><span class="cb" style="margin-top:-5px"></span></div>
<div class="cell" style="left:36.5px;top:369.2px;width:100.2px;height:35.1px">eqfqeeqf</div>
<div class="cell" style="left:136.7px;top:369.2px;width:50.6px;height:35.1px"></div>
<div class="cell" style="left:187.3px;top:369.2px;width:142.3px;height:35.1px">R2025093003402266</div>
<div class="cell" style="left:329.6px;top:369.2px;width:104.2px;height:35.1px">1241435</div>
<div class="cell" style="left:433.8px;top:369.2px;width:94.9px;height:35.1px">eqfqeeqf</div>
<div class="cell" style="left:528.7px;top:369.2px;width:42.8px;height:35.1px">Lv 1</div>
<div class="cell" style="left:571.5px;top:369.2px;width:78.0px;height:35.1px">12312.00</div>
<div class="cell" style="left:649.5px;top:369.2px;width:136.9px;height:35.1px"></div>
<div class="cell" style="left:786.4px;top:369.2px;width:71.8px;height:35.1px">12312.00</div>
<div class="cell" style="left:858.2px;top:369.2px;width:82.4px;height:35.1px">0.000</div>
<div class="cell" style="left:940.6px;top:369.2px;width:92.8px;height:35.1px">111111111111</div>
<div class="cell" style="left:1033.4px;top:369.2px;width:62.0px;height:35.1px"></div>
<div class="cell" style="left:1095.4px;top:369.2px;width:68.8px;height:35.1px"><span class="lbl suc">充值成功</span></div>
<div class="cell" style="left:1172.5px;top:369.2px;width:60px;height:35.1px;justify-content:flex-start">2025</div>
<div class="trow" style="top:404.3px;height:35.6px;background:#f9f9f9"></div>
<div class="cell" style="left:0.0px;top:404.3px;width:36.5px;height:35.6px"><span class="cb" style="margin-top:-5px"></span></div>
<div class="cell" style="left:36.5px;top:404.3px;width:100.2px;height:35.6px">eqfqeeqf</div>
<div class="cell" style="left:136.7px;top:404.3px;width:50.6px;height:35.6px"></div>
<div class="cell" style="left:187.3px;top:404.3px;width:142.3px;height:35.6px">R2025093003397444</div>
<div class="cell" style="left:329.6px;top:404.3px;width:104.2px;height:35.6px">1241435</div>
<div class="cell" style="left:433.8px;top:404.3px;width:94.9px;height:35.6px">eqfqeeqf</div>
<div class="cell" style="left:528.7px;top:404.3px;width:42.8px;height:35.6px">Lv 1</div>
<div class="cell" style="left:571.5px;top:404.3px;width:78.0px;height:35.6px">1321.00</div>
<div class="cell" style="left:649.5px;top:404.3px;width:136.9px;height:35.6px"></div>
<div class="cell" style="left:786.4px;top:404.3px;width:71.8px;height:35.6px">1321.00</div>
<div class="cell" style="left:858.2px;top:404.3px;width:82.4px;height:35.6px">0.000</div>
<div class="cell" style="left:940.6px;top:404.3px;width:92.8px;height:35.6px">213123</div>
<div class="cell" style="left:1033.4px;top:404.3px;width:62.0px;height:35.6px"></div>
<div class="cell" style="left:1095.4px;top:404.3px;width:68.8px;height:35.6px"><span class="lbl suc">充值成功</span></div>
<div class="cell" style="left:1172.5px;top:404.3px;width:60px;height:35.6px;justify-content:flex-start">2025</div>
<div class="trow" style="top:439.9px;height:35.3px;background:#fff"></div>
<div class="cell" style="left:0.0px;top:439.9px;width:36.5px;height:35.3px"><span class="cb" style="margin-top:-5px"></span></div>
<div class="cell" style="left:36.5px;top:439.9px;width:100.2px;height:35.3px">eqfqeeqf</div>
<div class="cell" style="left:136.7px;top:439.9px;width:50.6px;height:35.3px"></div>
<div class="cell" style="left:187.3px;top:439.9px;width:142.3px;height:35.3px">R2025093003384755</div>
<div class="cell" style="left:329.6px;top:439.9px;width:104.2px;height:35.3px">123123456456</div>
<div class="cell" style="left:433.8px;top:439.9px;width:94.9px;height:35.3px">eqfqeeqf</div>
<div class="cell" style="left:528.7px;top:439.9px;width:42.8px;height:35.3px">Lv 1</div>
<div class="cell" style="left:571.5px;top:439.9px;width:78.0px;height:35.3px">20000.00</div>
<div class="cell" style="left:649.5px;top:439.9px;width:136.9px;height:35.3px"></div>
<div class="cell" style="left:786.4px;top:439.9px;width:71.8px;height:35.3px">20000.00</div>
<div class="cell" style="left:858.2px;top:439.9px;width:82.4px;height:35.3px">0.000</div>
<div class="cell" style="left:940.6px;top:439.9px;width:92.8px;height:35.3px">111111111111</div>
<div class="cell" style="left:1033.4px;top:439.9px;width:62.0px;height:35.3px"></div>
<div class="cell" style="left:1095.4px;top:439.9px;width:68.8px;height:35.3px"><span class="lbl suc">充值成功</span></div>
<div class="cell" style="left:1172.5px;top:439.9px;width:60px;height:35.3px;justify-content:flex-start">2025</div>
<div class="trow" style="top:475.2px;height:35.4px;background:#f9f9f9"></div>
<div class="cell" style="left:0.0px;top:475.2px;width:36.5px;height:35.4px"><span class="cb" style="margin-top:-5px"></span></div>
<div class="cell" style="left:36.5px;top:475.2px;width:100.2px;height:35.4px">eqfqeeqf</div>
<div class="cell" style="left:136.7px;top:475.2px;width:50.6px;height:35.4px"></div>
<div class="cell" style="left:187.3px;top:475.2px;width:142.3px;height:35.4px">R2025093003383565</div>
<div class="cell" style="left:329.6px;top:475.2px;width:104.2px;height:35.4px">123123456456</div>
<div class="cell" style="left:433.8px;top:475.2px;width:94.9px;height:35.4px">eqfqeeqf</div>
<div class="cell" style="left:528.7px;top:475.2px;width:42.8px;height:35.4px">Lv 1</div>
<div class="cell" style="left:571.5px;top:475.2px;width:78.0px;height:35.4px">20000.00</div>
<div class="cell" style="left:649.5px;top:475.2px;width:136.9px;height:35.4px"></div>
<div class="cell" style="left:786.4px;top:475.2px;width:71.8px;height:35.4px">20000.00</div>
<div class="cell" style="left:858.2px;top:475.2px;width:82.4px;height:35.4px">0.000</div>
<div class="cell" style="left:940.6px;top:475.2px;width:92.8px;height:35.4px">111111111111</div>
<div class="cell" style="left:1033.4px;top:475.2px;width:62.0px;height:35.4px"></div>
<div class="cell" style="left:1095.4px;top:475.2px;width:68.8px;height:35.4px"><span class="lbl suc">充值成功</span></div>
<div class="cell" style="left:1172.5px;top:475.2px;width:60px;height:35.4px;justify-content:flex-start">2025</div>
<div class="trow" style="top:510.6px;height:35.3px;background:#fff"></div>
<div class="cell" style="left:0.0px;top:510.6px;width:36.5px;height:35.3px"><span class="cb" style="margin-top:-5px"></span></div>
<div class="cell" style="left:36.5px;top:510.6px;width:100.2px;height:35.3px">eqfqeeqf</div>
<div class="cell" style="left:136.7px;top:510.6px;width:50.6px;height:35.3px"></div>
<div class="cell" style="left:187.3px;top:510.6px;width:142.3px;height:35.3px">R2025093003359102</div>
<div class="cell" style="left:329.6px;top:510.6px;width:104.2px;height:35.3px">1241435</div>
<div class="cell" style="left:433.8px;top:510.6px;width:94.9px;height:35.3px">eqfqeeqf</div>
<div class="cell" style="left:528.7px;top:510.6px;width:42.8px;height:35.3px">Lv 1</div>
<div class="cell" style="left:571.5px;top:510.6px;width:78.0px;height:35.3px">31231.00</div>
<div class="cell" style="left:649.5px;top:510.6px;width:136.9px;height:35.3px"></div>
<div class="cell" style="left:786.4px;top:510.6px;width:71.8px;height:35.3px">31231.00</div>
<div class="cell" style="left:858.2px;top:510.6px;width:82.4px;height:35.3px">0.000</div>
<div class="cell" style="left:940.6px;top:510.6px;width:92.8px;height:35.3px">213123</div>
<div class="cell" style="left:1033.4px;top:510.6px;width:62.0px;height:35.3px"></div>
<div class="cell" style="left:1095.4px;top:510.6px;width:68.8px;height:35.3px"><span class="lbl suc">充值成功</span></div>
<div class="cell" style="left:1172.5px;top:510.6px;width:60px;height:35.3px;justify-content:flex-start">2025</div>
<div class="vl" style="left:36.0px"></div>
<div class="vl" style="left:136.2px"></div>
<div class="vl" style="left:186.8px"></div>
<div class="vl" style="left:329.1px"></div>
<div class="vl" style="left:433.29999999999995px"></div>
<div class="vl" style="left:528.2px"></div>
<div class="vl" style="left:571.0px"></div>
<div class="vl" style="left:649.0px"></div>
<div class="vl" style="left:785.9000000000001px"></div>
<div class="vl" style="left:857.7px"></div>
<div class="vl" style="left:940.0999999999999px"></div>
<div class="vl" style="left:1032.9px"></div>
<div class="vl" style="left:1094.9px"></div>
<div class="vl" style="left:1163.7px"></div>
<div style="position:absolute;left:0;top:40.0px;width:1200px;height:1px;background:#ddd"></div>
<div style="position:absolute;left:0;top:0;width:1200px;height:1px;background:#f3f3f3"></div>
<div style="position:absolute;left:0;top:0;width:1px;height:547px;background:#f3f3f3"></div>
<div style="position:absolute;left:0;top:545.9px;width:1200px;height:1px;background:#eee"></div>
<svg style="position:absolute;left:703.5px;top:49.20000000000002px" width="29" height="61" viewBox="0 0 29 61">
<rect x="0" y="0" width="29" height="61" fill="#f5f5f5"/>
<rect x="0" y="0" width="29" height="5" fill="#fafafa"/>
<circle cx="1.5" cy="3" r="1" fill="#777"/><rect x="3" y="2.6" width="4" height="0.8" fill="#aaa"/><circle cx="27" cy="2.8" r="1" fill="#777"/>
<rect x="0" y="5.2" width="29" height="14" fill="#1a1a1a"/>
<rect x="0" y="14.5" width="3" height="4.7" fill="#3cc4d0"/><rect x="26" y="5.2" width="3" height="14" fill="#3cc4d0"/>
<ellipse cx="6.5" cy="12" rx="3.2" ry="4.8" fill="#5a4036"/>
<rect x="11" y="7" width="6" height="12" fill="#e8e8e8"/><rect x="13" y="10" width="2" height="2.5" fill="#d99"/>
<ellipse cx="22" cy="12" rx="3.5" ry="5.3" fill="#cfb5a8"/>
<rect x="11.5" y="22" width="6" height="1" fill="#666"/>
<rect x="6" y="24.6" width="17" height=".9" fill="#bbb"/>
<rect x="2" y="27.4" width="25" height="4.8" rx="2" fill="#fff"/>
<rect x="2" y="33.5" width="25" height="3.5" rx="1.5" fill="#fff"/>
<rect x="0.5" y="38.6" width="28" height="3.6" rx="1.8" fill="#050505"/><rect x="12" y="40" width="4" height=".7" fill="#888"/>
<rect x="0.5" y="43.7" width="28" height="3.6" rx="1.8" fill="#050505"/><rect x="11" y="45.1" width="6" height=".7" fill="#888"/>
<rect x="16" y="49.3" width="12" height=".9" fill="#e8708a"/>
</svg>
<svg style="position:absolute;left:703.5px;top:126.20000000000002px" width="29" height="61" viewBox="0 0 29 61">
<rect x="0" y="0" width="29" height="61" fill="#f5f5f5"/>
<rect x="0" y="0" width="29" height="5" fill="#fafafa"/>
<circle cx="1.5" cy="3" r="1" fill="#777"/><rect x="3" y="2.6" width="4" height="0.8" fill="#aaa"/><circle cx="27" cy="2.8" r="1" fill="#777"/>
<rect x="0" y="5.2" width="29" height="14" fill="#1a1a1a"/>
<rect x="0" y="14.5" width="3" height="4.7" fill="#3cc4d0"/><rect x="26" y="5.2" width="3" height="14" fill="#3cc4d0"/>
<ellipse cx="6.5" cy="12" rx="3.2" ry="4.8" fill="#5a4036"/>
<rect x="11" y="7" width="6" height="12" fill="#e8e8e8"/><rect x="13" y="10" width="2" height="2.5" fill="#d99"/>
<ellipse cx="22" cy="12" rx="3.5" ry="5.3" fill="#cfb5a8"/>
<rect x="11.5" y="22" width="6" height="1" fill="#666"/>
<rect x="6" y="24.6" width="17" height=".9" fill="#bbb"/>
<rect x="2" y="27.4" width="25" height="4.8" rx="2" fill="#fff"/>
<rect x="2" y="33.5" width="25" height="3.5" rx="1.5" fill="#fff"/>
<rect x="0.5" y="38.6" width="28" height="3.6" rx="1.8" fill="#050505"/><rect x="12" y="40" width="4" height=".7" fill="#888"/>
<rect x="0.5" y="43.7" width="28" height="3.6" rx="1.8" fill="#050505"/><rect x="11" y="45.1" width="6" height=".7" fill="#888"/>
<rect x="16" y="49.3" width="12" height=".9" fill="#e8708a"/>
</svg>
</div>
</body></html>
